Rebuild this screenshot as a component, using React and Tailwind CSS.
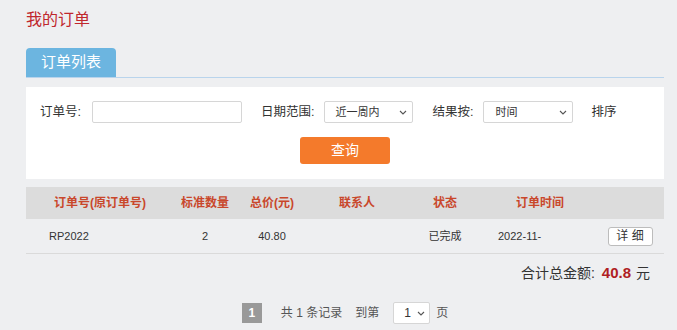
import React from 'react';

const FONT = { fontFamily: '"Liberation Sans", "Noto Sans CJK SC", sans-serif' };

// small "v" chevron used by the fake selects
const Chevron = () => (
  <svg width="8" height="5" viewBox="0 0 8 5" className="shrink-0">
    <path d="M1 1 L4 4 L7 1" fill="none" stroke="#555" strokeWidth="1.1" />
  </svg>
);

const FakeSelect = ({ value, className, textClass }) => (
  <div className={`flex shrink-0 items-center justify-between bg-white border border-[#d6d6d6] rounded-[2px] ${className}`}>
    <span className={textClass}>{value}</span>
    <Chevron />
  </div>
);

const columns = ['订单号(原订单号)', '标准数量', '总价(元)', '联系人', '状态', '订单时间', ''];

export default function App() {
  return (
    <div style={FONT} className="w-[677px] h-[330px] overflow-hidden bg-[#eeeff1] pl-[26px] pr-[13px] text-[#333]">
      {/* page title */}
      <div className="pt-[10px] h-[30px] text-[16px] leading-[20px] text-[#c0272d]">我的订单</div>

      {/* tab strip */}
      <div className="mt-[18px] border-b border-[#b9d4ec] flex">
        <div className="w-[90px] h-[29px] rounded-t-[4px] bg-[#6cb5e0] text-white text-[15px] flex items-center justify-center">
          订单列表
        </div>
      </div>

      {/* search panel */}
      <div className="mt-[9px] h-[92px] bg-white pt-[14px]">
        <div className="flex items-center h-[22px] text-[12.5px] pl-[14px] whitespace-nowrap">
          <span className="shrink-0">订单号:</span>
          <div className="ml-[11px] shrink-0 w-[150px] h-[22px] border border-[#d6d6d6] rounded-[2px]" />
          <span className="ml-[19px] shrink-0">日期范围:</span>
          <FakeSelect value="近一周内" className="ml-[10px] w-[89px] h-[22px] pl-[10px] pr-[5px]" textClass="text-[11px]" />
          <span className="ml-[19px] shrink-0">结果按:</span>
          <FakeSelect value="时间" className="ml-[10px] w-[90px] h-[22px] pl-[11px] pr-[5px]" textClass="text-[11px]" />
          <span className="ml-[18px] shrink-0">排序</span>
        </div>
        <div className="flex justify-center mt-[14px]">
          <div className="w-[90px] h-[27px] rounded-[3px] bg-[#f47a2b] text-white text-[14px] flex items-center justify-center">
            查询
          </div>
        </div>
      </div>

      {/* order table */}
      <div className="mt-[8px]">
        <div className="grid grid-cols-[148px_62px_72px_98px_78px_112px_68px] h-[32px] bg-[#dcdcdc] text-[12px] font-bold text-[#c9472b]">
          {columns.map((c, i) => (
            <div key={i} className="flex items-center justify-center">{c}</div>
          ))}
        </div>
        <div className="grid grid-cols-[148px_62px_72px_98px_78px_112px_68px] h-[35px] border-b border-[#dadada] text-[11px]">
          <div className="flex items-center pl-[23px]">RP2022</div>
          <div className="flex items-center justify-center">2</div>
          <div className="flex items-center justify-center">40.80</div>
          <div />
          <div className="flex items-center justify-center">已完成</div>
          <div className="flex items-center pl-[14px]">
            <span className="whitespace-nowrap">2022-11-</span>
          </div>
          <div className="flex items-center justify-center">
            <div className="w-[45px] h-[19px] bg-white border border-[#bcbcbc] rounded-[3px] text-[12px] flex items-center justify-center">
              详 细
            </div>
          </div>
        </div>
      </div>

      {/* total */}
      <div className="h-[38px] flex items-center justify-end pr-[14px] text-[14px]">
        <span>合计总金额:</span>
        <span className="ml-[7px] text-[15px] font-bold text-[#b01e23]">40.8</span>
        <span className="ml-[5px]">元</span>
      </div>

      {/* pagination */}
      <div className="mt-[10px] flex items-center justify-center text-[12px] text-[#555]">
        <div className="w-[20px] h-[20px] bg-[#999] text-white font-bold flex items-center justify-center">1</div>
        <span className="ml-[19px]">共 1 条记录</span>
        <span className="ml-[13px]">到第</span>
        <FakeSelect value="1" className="ml-[14px] w-[37px] h-[22px] pl-[10px] pr-[4px]" textClass="text-[12px] text-[#333]" />
        <span className="ml-[6px]">页</span>
      </div>
    </div>
  );
}
